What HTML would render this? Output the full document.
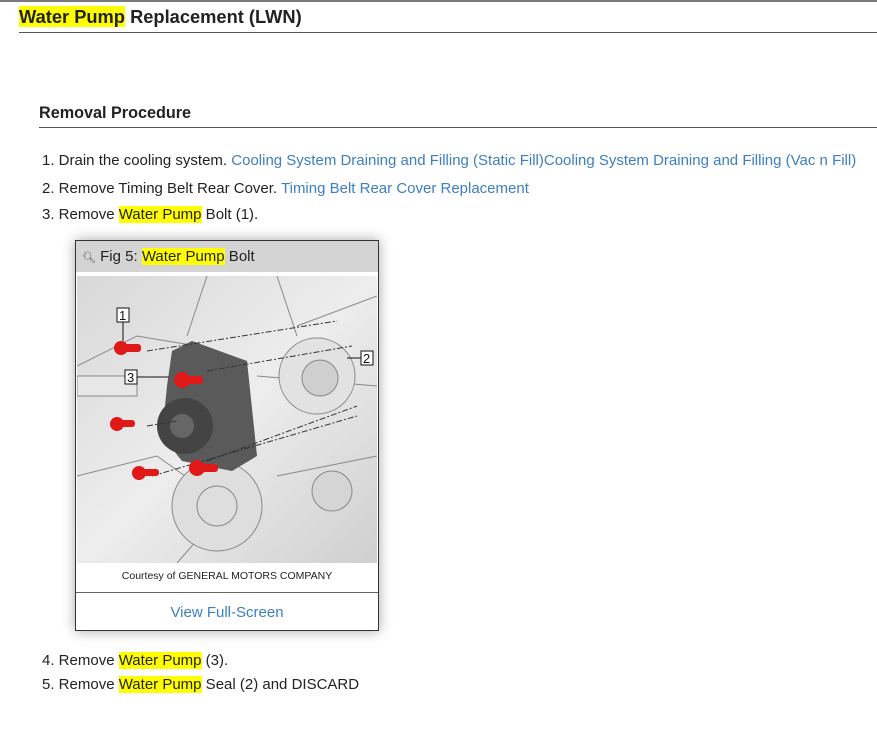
<!DOCTYPE html>
<html><head><meta charset="utf-8"><style>
*{margin:0;padding:0;box-sizing:border-box}
body{width:877px;height:732px;background:#fff;font-family:"Liberation Sans",sans-serif;color:#222;position:relative;overflow:hidden}
.abs{position:absolute}
.hl{background:#ffff00}
a{color:#3d7fc1;text-decoration:none}
.li{position:absolute;left:42px;font-size:15px;white-space:nowrap}
</style></head><body>
<div class="abs" style="left:0;top:0;width:877px;height:2px;background:#7a7a7a"></div>
<div class="abs" style="left:19px;top:6px;font-size:18.3px;font-weight:bold;color:#222"><span class="hl">Water Pump</span> Replacement (LWN)</div>
<div class="abs" style="left:19px;top:32px;width:858px;height:1px;background:#555"></div>
<div class="abs" style="left:39px;top:104px;font-size:16.2px;font-weight:bold;color:#222">Removal Procedure</div>
<div class="abs" style="left:39px;top:127px;width:838px;height:1px;background:#555"></div>
<div class="li" style="top:152px">1. Drain the cooling system. <a>Cooling System Draining and Filling (Static Fill)Cooling System Draining and Filling (Vac n Fill)</a></div>
<div class="li" style="top:180px">2. Remove Timing Belt Rear Cover. <a>Timing Belt Rear Cover Replacement</a></div>
<div class="li" style="top:206px">3. Remove <span class="hl">Water Pump</span> Bolt (1).</div>
<div class="abs" style="left:75px;top:240px;width:304px;height:391px;border:1px solid #333;box-shadow:0 0 12px rgba(0,0,0,.35);background:#fff">
 <div style="height:31px;background:#d4d4d4;font-size:15px;padding:7px 0 0 6px;color:#222"><span style="font-size:11px;color:#556">&#x1F50D;&#xFE0E;</span> Fig 5: <span class="hl">Water Pump</span> Bolt</div>
 <svg width="300" height="287" style="position:absolute;left:1px;top:35px" viewBox="0 0 300 287">
  <defs><linearGradient id="g" x1="0" y1="0" x2="1" y2="1"><stop offset="0" stop-color="#d8d8d8"/><stop offset=".5" stop-color="#ededed"/><stop offset="1" stop-color="#cfcfcf"/></linearGradient></defs>
  <rect width="300" height="287" fill="url(#g)"/>
  <g stroke="#888" stroke-width="1" fill="none">
   <path d="M0 90 L60 60 L120 70 M0 200 L80 180 L150 230 L100 287 M200 200 L300 180 M180 100 L300 110 M220 50 L300 20 M130 0 L110 60 M200 0 L220 60"/>
   <circle cx="240" cy="100" r="38" fill="#e2e2e2"/><circle cx="243" cy="102" r="18" fill="#cfcfcf"/>
   <circle cx="140" cy="230" r="45" fill="#dedede"/><circle cx="140" cy="230" r="20"/>
   <circle cx="255" cy="215" r="20" fill="#d5d5d5"/>
   <rect x="0" y="100" width="60" height="20" fill="#e8e8e8"/>
  </g>
  <path d="M95 75 L115 65 L170 85 L180 180 L155 195 L105 185 L85 160 L90 110Z" fill="#5a5a5a"/>
  <circle cx="108" cy="150" r="28" fill="#444"/><circle cx="105" cy="150" r="12" fill="#666"/>
  <g stroke="#333" stroke-dasharray="6 2 2 2" stroke-width="1"><path d="M70 75 L260 45 M130 95 L275 70 M70 150 L100 145 M130 185 L280 130 M75 200 L280 140"/></g>
  <g fill="#e01818"><rect x="40" y="68" width="24" height="8" rx="3"/><circle cx="44" cy="72" r="7"/>
  <rect x="100" y="100" width="26" height="8" rx="3"/><circle cx="105" cy="104" r="8"/>
  <rect x="36" y="144" width="22" height="7" rx="3"/><circle cx="40" cy="148" r="7"/>
  <rect x="58" y="193" width="24" height="7" rx="3"/><circle cx="62" cy="197" r="7"/>
  <rect x="115" y="188" width="26" height="8" rx="3"/><circle cx="120" cy="192" r="8"/></g>
  <g font-family="Liberation Sans" font-size="13" fill="#111"><rect x="40" y="32" width="12" height="14" fill="#fff" stroke="#111"/><text x="42" y="44">1</text>
  <rect x="284" y="75" width="12" height="14" fill="#fff" stroke="#111"/><text x="286" y="87">2</text>
  <rect x="48" y="94" width="12" height="14" fill="#fff" stroke="#111"/><text x="50" y="106">3</text></g>
  <path d="M46 46 V65 M60 101 H92 M270 82 H284" stroke="#111"/>
 </svg>
 <div style="position:absolute;top:329px;width:100%;text-align:center;font-size:10.5px;color:#222">Courtesy of GENERAL MOTORS COMPANY</div>
 <div style="position:absolute;top:351px;width:100%;height:1px;background:#666"></div>
 <div style="position:absolute;top:363px;width:100%;text-align:center;font-size:15px;color:#3d7fc1">View Full-Screen</div>
</div>
<div class="li" style="top:652px">4. Remove <span class="hl">Water Pump</span> (3).</div>
<div class="li" style="top:676px">5. Remove <span class="hl">Water Pump</span> Seal (2) and DISCARD</div>
</body></html>
